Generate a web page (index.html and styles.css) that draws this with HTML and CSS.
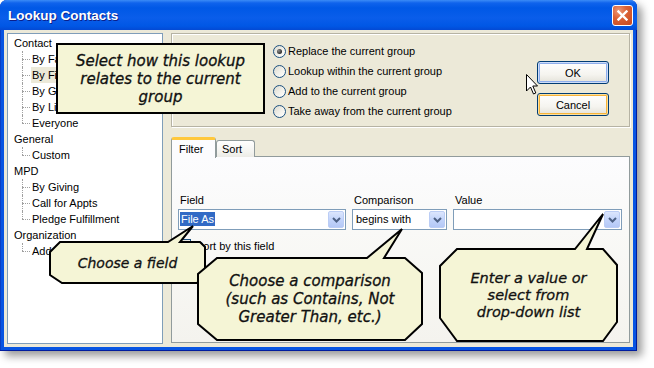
FILE: index.html
```html
<!DOCTYPE html>
<html>
<head>
<meta charset="utf-8">
<title>Lookup Contacts</title>
<link rel="stylesheet" href="styles.css">
</head>
<body>
<div class="window">
  <div class="titlebar">
    <span class="title">Lookup Contacts</span>
    <span class="close">
      <svg width="11" height="11" viewBox="0 0 11 11"><path d="M1.5 1.5 L9.5 9.5 M9.5 1.5 L1.5 9.5" stroke="#fff" stroke-width="2.4" stroke-linecap="square"/></svg>
    </span>
  </div>
  <div class="client">
    <div class="tree">
      <div class="node">Contact</div>
      <div class="children">
        <div class="leaf">By Family</div>
        <div class="leaf"><span class="sel">By Field</span></div>
        <div class="leaf">By Group</div>
        <div class="leaf">By List</div>
        <div class="leaf last">Everyone</div>
      </div>
      <div class="node">General</div>
      <div class="children">
        <div class="leaf last">Custom</div>
      </div>
      <div class="node">MPD</div>
      <div class="children">
        <div class="leaf">By Giving</div>
        <div class="leaf">Call for Appts</div>
        <div class="leaf last">Pledge Fulfillment</div>
      </div>
      <div class="node">Organization</div>
      <div class="children">
        <div class="leaf last">Address</div>
      </div>
    </div>
    <div class="main">
      <div class="groupbox">
        <div class="radios">
          <div class="radio"><span class="rb on"></span>Replace the current group</div>
          <div class="radio"><span class="rb"></span>Lookup within the current group</div>
          <div class="radio"><span class="rb"></span>Add to the current group</div>
          <div class="radio"><span class="rb"></span>Take away from the current group</div>
        </div>
        <div class="buttons">
          <div class="btn ok">OK</div>
          <div class="btn cancel">Cancel</div>
        </div>
      </div>
      <div class="tabs">
        <div class="tab active">Filter</div>
        <div class="tab">Sort</div>
      </div>
      <div class="pane">
        <div class="fields">
          <div class="fcol c1">
            <div class="flabel">Field</div>
            <div class="combo"><span class="ctext"><span class="hl">File As</span></span><span class="drop"><svg width="9" height="6" viewBox="0 0 9 6"><path d="M1 1 L4.5 4.5 L8 1" fill="none" stroke="#4D6185" stroke-width="2"/></svg></span></div>
          </div>
          <div class="fcol c2">
            <div class="flabel">Comparison</div>
            <div class="combo"><span class="ctext">begins with</span><span class="drop"><svg width="9" height="6" viewBox="0 0 9 6"><path d="M1 1 L4.5 4.5 L8 1" fill="none" stroke="#4D6185" stroke-width="2"/></svg></span></div>
          </div>
          <div class="fcol c3">
            <div class="flabel">Value</div>
            <div class="combo"><span class="ctext"></span><span class="drop"><svg width="9" height="6" viewBox="0 0 9 6"><path d="M1 1 L4.5 4.5 L8 1" fill="none" stroke="#4D6185" stroke-width="2"/></svg></span></div>
          </div>
        </div>
        <div class="check"><span class="cb"></span>Sort by this field</div>
      </div>
    </div>
  </div>
</div>

<svg class="cursor" width="13" height="22" viewBox="0 0 13 22"><path d="M0.5 0.5 L0.5 17 L4.5 13 L7.5 20 L9.8 19 L6.8 12 L11.5 12 Z" fill="#fff" stroke="#000" stroke-width="1"/></svg>

<svg class="overlay" width="654" height="368" viewBox="0 0 654 368">
  <g fill="#F5F5D6" stroke="#000" stroke-width="2" stroke-linejoin="miter">
    <polygon points="57,44 264,44 264,113 57,113"/>
    <polygon points="60,242 168,242 193,226 180,242 200,242 205,247 205,275 197,283 62,283 50,275 50,252"/>
    <polygon points="217,258 367,258 402,229 384,258 405,258 422,273 422,324 405,340 217,340 198,324 198,274"/>
    <polygon points="457,249 575,249 603,214 587,249 603,249 617,265 617,322 603,341 457,341 440,318 440,266"/>
  </g>
</svg>

<div class="callout co1">Select how this lookup<br>relates to the current<br>group</div>
<div class="callout co2">Choose a field</div>
<div class="callout co3">Choose a comparison<br>(such as Contains, Not<br>Greater Than, etc.)</div>
<div class="callout co4">Enter a value or<br>select from<br>drop-down list</div>
</body>
</html>
```
FILE: styles.css
```css
html, body {
  margin: 0;
  padding: 0;
  background: #ffffff;
}
body {
  width: 654px;
  height: 368px;
  position: relative;
  overflow: hidden;
  font-family: "Liberation Sans", Arial, sans-serif;
  font-size: 11px;
  color: #000;
}
.window {
  width: 637px;
  height: 351px;
  box-sizing: border-box;
  background: #0855E2;
  border-radius: 7px 7px 0 0;
  box-shadow: inset -1px -1px 0 #001C9E, inset 1px 0 0 #0A3FC4, 5px 5px 8px rgba(0,0,0,0.4);
  display: flex;
  flex-direction: column;
}
.titlebar {
  height: 30px;
  flex: none;
  display: flex;
  align-items: center;
  padding: 0 4px 0 8px;
  border-radius: 7px 7px 0 0;
  background: linear-gradient(to bottom, #3B8BF6 0px, #0F63EC 3px, #0058E6 8px, #0A5DEA 18px, #0057E5 26px, #0349D4 30px);
}
.title {
  flex: 1;
  color: #fff;
  font-weight: bold;
  font-size: 13.5px;
  text-shadow: 1px 1px 0 #0B1F8A;
}
.close {
  width: 21px;
  height: 21px;
  box-sizing: border-box;
  border: 1px solid #fff;
  border-radius: 3px;
  background: radial-gradient(circle at 30% 25%, #EC9A7A 0%, #DB6236 40%, #C8481F 100%);
  display: flex;
  align-items: center;
  justify-content: center;
  margin-top: 1px;
}
.client {
  flex: 1;
  margin: 0 4px 4px 4px;
  background: #ECE9D8;
  padding: 3px;
  display: flex;
  gap: 8px;
}
.tree {
  width: 156px;
  flex: none;
  box-sizing: border-box;
  border: 1px solid #7F9DB9;
  background: #fff;
  padding: 1px 0 0 6px;
  line-height: 16px;
}
.node {
  height: 16px;
}
.children {
  margin-left: 8px;
}
.leaf {
  position: relative;
  height: 16px;
  padding-left: 10px;
}
.leaf::before {
  content: "";
  position: absolute;
  left: 0;
  top: 8px;
  width: 8px;
  border-top: 1px dotted #A0A0A0;
}
.leaf::after {
  content: "";
  position: absolute;
  left: 0;
  top: 0;
  height: 16px;
  border-left: 1px dotted #A0A0A0;
}
.leaf.last::after {
  height: 8px;
}
.sel {
  background: #ECE9D8;
  padding: 0 2px 0 1px;
  margin-left: -1px;
  display: inline-block;
  height: 16px;
}
.main {
  flex: 1;
  display: flex;
  flex-direction: column;
}
.groupbox {
  height: 94px;
  flex: none;
  box-sizing: border-box;
  border: 1px solid #B6B3A4;
  box-shadow: inset 1px 1px 0 #fff, 1px 1px 0 #fff;
  display: flex;
  padding: 7px 20px 0 101px;
}
.radios {
  flex: 1;
  display: flex;
  flex-direction: column;
}
.radio {
  height: 20px;
  display: flex;
  align-items: center;
}
.rb {
  width: 13px;
  height: 13px;
  box-sizing: border-box;
  border: 1px solid #1C5180;
  border-radius: 50%;
  background: linear-gradient(135deg, #DCD9CF 0%, #F2F1EB 55%, #ffffff 100%);
  margin-right: 2px;
  display: flex;
  align-items: center;
  justify-content: center;
}
.rb.on::after {
  content: "";
  width: 5px;
  height: 5px;
  border-radius: 50%;
  background: radial-gradient(circle at 35% 35%, #8A8A8A 0%, #2E2E2E 70%);
}
.buttons {
  display: flex;
  flex-direction: column;
  gap: 9px;
  padding-top: 20px;
}
.btn {
  width: 72px;
  height: 23px;
  box-sizing: border-box;
  border: 1px solid #003C74;
  border-radius: 3px;
  background: linear-gradient(to bottom, #FFFFFF 0%, #F5F4EF 60%, #E3E1D8 100%);
  display: flex;
  align-items: center;
  justify-content: center;
  font-size: 11px;
}
.btn.ok {
  box-shadow: inset 0 0 0 1px #CEDDF9, inset 0 0 0 2px #8EAEEC;
}
.btn.cancel {
  box-shadow: inset 0 0 0 1px #FCE09E, inset 0 0 0 2px #F7B43A;
}
.tabs {
  height: 20px;
  flex: none;
  margin-top: 10px;
  display: flex;
  align-items: flex-end;
  position: relative;
  z-index: 1;
}
.tab {
  box-sizing: border-box;
  border: 1px solid #919B9C;
  border-bottom: none;
  border-radius: 3px 3px 0 0;
  height: 17px;
  padding: 2px 6px 0 5px;
  width: 39px;
  background: linear-gradient(to bottom, #FFFFFF 0%, #F3F3EF 70%, #ECEBE6 100%);
}
.tab.active {
  width: 45px;
  height: 21px;
  padding: 3px 0 0 7px;
  background: #FCFCFE;
  border-top: 3px solid #FFC83C;
  margin-bottom: -1px;
}
.pane {
  flex: 1;
  margin-top: -1px;
  margin-bottom: 1px;
  box-sizing: border-box;
  border: 1px solid #919B9C;
  background: linear-gradient(to bottom, #FCFCFE 0%, #F9F9F7 40%, #F4F3EE 100%);
  padding: 37px 6px 0 6px;
}
.fields {
  display: flex;
  gap: 6px;
}
.fcol.c1 { width: 168px; }
.fcol.c2 { width: 95px; }
.fcol.c3 { width: 169px; }
.flabel {
  height: 13px;
  line-height: 13px;
  padding-left: 2px;
  margin-bottom: 2px;
}
.combo {
  height: 21px;
  box-sizing: border-box;
  border: 1px solid #7F9DB9;
  background: #fff;
  display: flex;
  align-items: center;
  padding: 1px;
}
.ctext {
  flex: 1;
  padding-left: 2px;
  line-height: 15px;
}
.c1 .ctext {
  padding-left: 0;
}
.hl {
  background: #316AC5;
  color: #fff;
  padding: 1px 1px;
}
.drop {
  width: 16px;
  height: 17px;
  box-sizing: border-box;
  border: 1px solid #BBCDF5;
  border-radius: 2px;
  background: linear-gradient(to bottom, #DCE6FD 0%, #C3D4FB 50%, #B4C8F6 100%);
  display: flex;
  align-items: center;
  justify-content: center;
}
.check {
  margin-top: 9px;
  height: 13px;
  display: flex;
  align-items: center;
}
.cb {
  width: 13px;
  height: 13px;
  box-sizing: border-box;
  border: 1px solid #1C5180;
  background: linear-gradient(135deg, #DCD9CF 0%, #fff 100%);
  margin-right: 5px;
}
.cursor {
  position: absolute;
  left: 526px;
  top: 74px;
}
.overlay {
  position: absolute;
  left: 0;
  top: 0;
  pointer-events: none;
}
.callout {
  position: absolute;
  display: flex;
  align-items: center;
  justify-content: center;
  text-align: center;
  font-family: "DejaVu Sans", Verdana, sans-serif;
  font-style: italic;
  font-size: 15px;
  line-height: 18px;
  color: #111;
  -webkit-text-stroke: 0.3px #111;
}
.co1 { left: 57px; top: 44px; width: 207px; height: 69px; }
.co2 { left: 50px; top: 242px; width: 155px; height: 41px; font-size: 14px; }
.co3 { left: 198px; top: 258px; width: 224px; height: 82px; }
.co4 { left: 440px; top: 249px; width: 177px; height: 92px; line-height: 17px; font-size: 14.5px; }
```
